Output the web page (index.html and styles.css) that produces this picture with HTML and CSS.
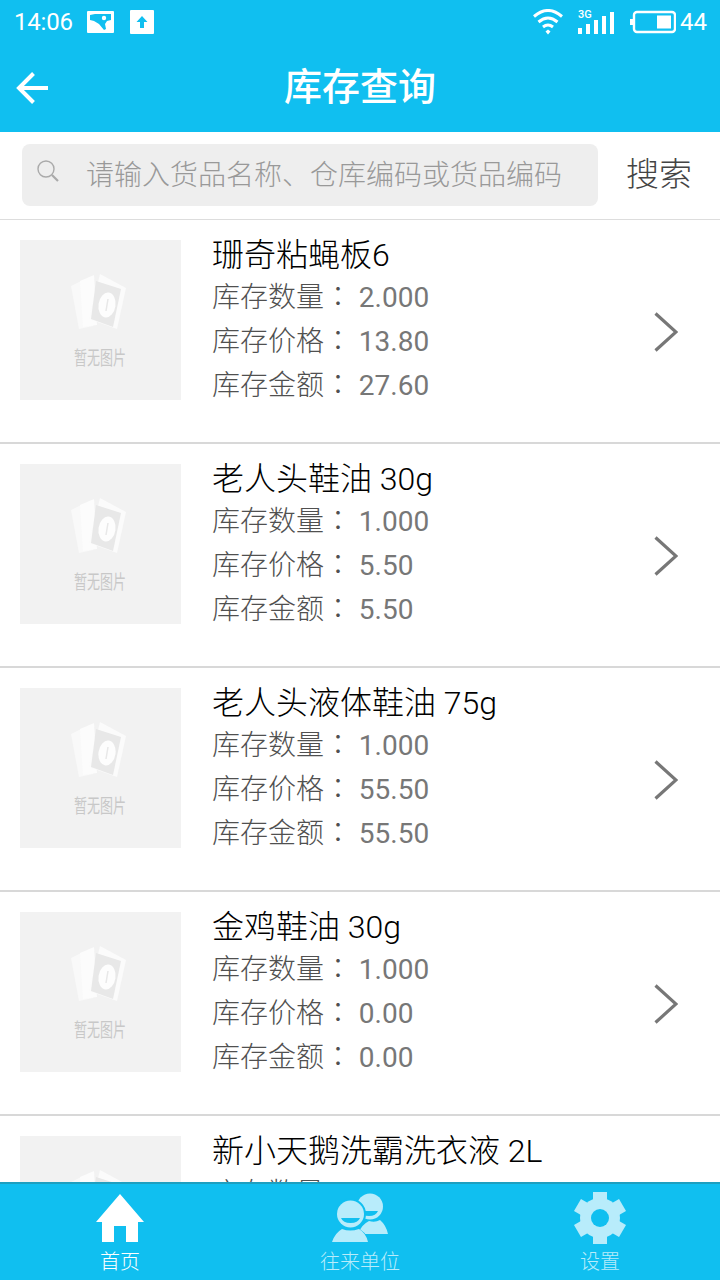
FILE: index.html
```
<!DOCTYPE html>
<html lang="zh-CN">

<head>
    <meta charset="UTF-8">
    <meta name="viewport" content="width=device-width, initial-scale=1.0">
    <title>库存查询</title>
    <link rel="stylesheet" href="styles.css">
</head>

<body>
    <svg class="defs" width="0" height="0">
        <symbol id="no-image" viewBox="0 0 161 160">
            <path d="M51 46l12-6 10 46-14 3z" fill="#f9f9f9" />
            <path d="M60 41l14-6 3 50-14 2z" fill="#fcfcfc" />
            <path d="M80 34l26 14-9 41-28-10z" fill="#fbfbfb" />
            <path d="M76 41l25 8-8 38-22-8z" fill="#e8e8e8" />
            <ellipse cx="87" cy="65" rx="8.500" ry="12.500" transform="rotate(8 87 65)" fill="#fdfdfd" />
            <path d="M88 59l-2 12" stroke="#e8e8e8" stroke-width="1.500" />
            <text x="54" y="124.500" textLength="52" lengthAdjust="spacingAndGlyphs">暂无图片</text>
        </symbol>
        <symbol id="arrow" viewBox="0 0 24 40">
            <path d="M1.500 1.500L22 20 1.500 38.500" fill="none" stroke="#777" stroke-width="3.200" />
        </symbol>
    </svg>

    <div class="page">
        <div class="header">
            <div class="status">
                <span class="time">14:06</span>
                <svg class="icon-pic" width="27" height="22" viewBox="0 0 27 22">
                    <rect width="27" height="22" rx="1" fill="#fff" />
                    <path d="M3 4l5-1h16v6l-4 1-2 3 1 5-2 1-5-6-5-3-4-1z" fill="#10bff0" />
                    <circle cx="17" cy="7" r="2.200" fill="#fff" />
                </svg>
                <svg class="icon-up" width="24" height="24" viewBox="0 0 24 24">
                    <rect width="24" height="24" rx="1" fill="#fff" />
                    <path d="M12 6l5.500 6H14v6h-4v-6H6.500z" fill="#10bff0" />
                </svg>
                <svg class="icon-wifi" width="30" height="26" viewBox="0 0 30 26" fill="none" stroke="#fff" stroke-width="3">
                    <path d="M1 7.500q14-12 28 0M5.500 13q9.500-8 19 0M10 18q5-4 10 0" />
                    <path d="M15 20.500l2.500 2-2.500 3-2.500-3z" fill="#fff" stroke="none" />
                </svg>
                <svg class="icon-signal" width="38" height="26" viewBox="0 0 38 26">
                    <text x="0" y="9">3G</text>
                    <path d="M2 19v6M10 15v10M18 11v14M26 7v18M34 3v22" stroke="#fff" stroke-width="4" />
                </svg>
                <svg class="icon-battery" width="46" height="24" viewBox="0 0 46 24">
                    <rect x="4" y="2" width="41" height="20" rx="3" fill="none" stroke="#fff" stroke-width="2.400" />
                    <rect x="0" y="9" width="3" height="6" fill="#fff" />
                    <rect x="27" y="5.500" width="14" height="13" fill="#fff" />
                </svg>
                <span class="power">44</span>
            </div>
            <div class="title-bar">
                <svg class="back" width="32" height="32" viewBox="0 0 32 32" fill="none" stroke="#fff" stroke-width="4">
                    <path d="M17.500 1.500L3 16l14.500 14.500M3 16h29" />
                </svg>
                <h1 class="title">库存查询</h1>
            </div>
        </div>

        <div class="search">
            <div class="search-box">
                <svg class="icon-search" width="22" height="22" viewBox="0 0 22 22" fill="none" stroke="#aaa">
                    <circle cx="9" cy="9" r="8" stroke-width="1.400" />
                    <path d="M15 15l6 6" stroke-width="2.200" />
                </svg>
                <span class="placeholder">请输入货品名称、仓库编码或货品编码</span>
            </div>
            <span class="search-btn">搜索</span>
        </div>

        <ul class="list">
            <li class="item">
                <svg class="thumb"><use href="#no-image" /></svg>
                <div class="info">
                    <h2 class="name">珊奇粘蝇板6</h2>
                    <p>库存数量<i lang="zh-TW">：</i> <span>2.000</span></p>
                    <p>库存价格<i lang="zh-TW">：</i> <span>13.80</span></p>
                    <p>库存金额<i lang="zh-TW">：</i> <span>27.60</span></p>
                </div>
                <svg class="arrow"><use href="#arrow" /></svg>
            </li>
            <li class="item">
                <svg class="thumb"><use href="#no-image" /></svg>
                <div class="info">
                    <h2 class="name">老人头鞋油 30g</h2>
                    <p>库存数量<i lang="zh-TW">：</i> <span>1.000</span></p>
                    <p>库存价格<i lang="zh-TW">：</i> <span>5.50</span></p>
                    <p>库存金额<i lang="zh-TW">：</i> <span>5.50</span></p>
                </div>
                <svg class="arrow"><use href="#arrow" /></svg>
            </li>
            <li class="item">
                <svg class="thumb"><use href="#no-image" /></svg>
                <div class="info">
                    <h2 class="name">老人头液体鞋油 75g</h2>
                    <p>库存数量<i lang="zh-TW">：</i> <span>1.000</span></p>
                    <p>库存价格<i lang="zh-TW">：</i> <span>55.50</span></p>
                    <p>库存金额<i lang="zh-TW">：</i> <span>55.50</span></p>
                </div>
                <svg class="arrow"><use href="#arrow" /></svg>
            </li>
            <li class="item">
                <svg class="thumb"><use href="#no-image" /></svg>
                <div class="info">
                    <h2 class="name">金鸡鞋油 30g</h2>
                    <p>库存数量<i lang="zh-TW">：</i> <span>1.000</span></p>
                    <p>库存价格<i lang="zh-TW">：</i> <span>0.00</span></p>
                    <p>库存金额<i lang="zh-TW">：</i> <span>0.00</span></p>
                </div>
                <svg class="arrow"><use href="#arrow" /></svg>
            </li>
            <li class="item">
                <svg class="thumb"><use href="#no-image" /></svg>
                <div class="info">
                    <h2 class="name">新小天鹅洗霸洗衣液 2L</h2>
                    <p>库存数量</p>
                </div>
            </li>
        </ul>

        <div class="nav">
            <div class="nav-item active">
                <svg width="56" height="56" viewBox="0 0 56 56" fill="currentColor">
                    <path d="M28 4l24 28h-6v20H34V36H22v16H10V32H4z" />
                </svg>
                <span>首页</span>
            </div>
            <div class="nav-item">
                <svg width="56" height="56" viewBox="0 0 56 56">
                    <circle cx="38" cy="16.500" r="13" fill="currentColor" />
                    <path d="M28 21h18q-2 5-9 5-7 0-9-5z" fill="#10bff0" />
                    <path d="M26 44q3-9 11-13 6 2 11-1 6 5 8 14z" fill="currentColor" />
                    <circle cx="18.500" cy="24" r="15.500" fill="#10bff0" />
                    <path d="M24 37q10 4 13 15H24z" fill="#10bff0" />
                    <circle cx="18.500" cy="24" r="13.500" fill="currentColor" />
                    <path d="M9 28h19q-2 5-9.500 5T9 28z" fill="#10bff0" />
                    <path d="M0 52q3-9 10-13 8 3 17 0 7 4 9 13z" fill="currentColor" />
                </svg>
                <span>往来单位</span>
            </div>
            <div class="nav-item">
                <svg width="56" height="56" viewBox="0 0 56 56">
                    <g fill="currentColor">
                        <circle cx="28" cy="28" r="20" />
                        <path id="tooth" d="M21 2h14v18H21z" />
                        <use href="#tooth" transform="rotate(60 28 28)" />
                        <use href="#tooth" transform="rotate(120 28 28)" />
                        <use href="#tooth" transform="rotate(180 28 28)" />
                        <use href="#tooth" transform="rotate(240 28 28)" />
                        <use href="#tooth" transform="rotate(300 28 28)" />
                    </g>
                    <circle cx="28" cy="28" r="9" fill="#10bff0" />
                </svg>
                <span>设置</span>
            </div>
        </div>
    </div>
</body>

</html>
```
FILE: styles.css
```
* {
    margin: 0;
    padding: 0;
    box-sizing: border-box;
}

body {
    font-family: Roboto, "Noto Sans CJK SC", sans-serif;
    font-weight: 300;
    background: #fff;
}

svg {
    display: block;
    flex-shrink: 0;
}

.defs {
    position: absolute;
}

.page {
    display: flex;
    flex-direction: column;
    width: 720px;
    height: 1280px;
    overflow: hidden;
}

.header {
    height: 132px;
    flex-shrink: 0;
    background: #10bff0;
    color: #fff;
}

.status {
    display: flex;
    align-items: center;
    height: 44px;
    padding: 0 13px 0 14px;
    font-size: 24px;
    font-weight: 400;
}

.time {
    width: 59px;
    letter-spacing: -0.2px;
}

.icon-pic {
    margin-left: 14px;
}

.icon-up {
    margin-left: 16px;
}

.icon-wifi {
    margin-left: auto;
}

.icon-signal {
    margin-left: 15px;
    font-size: 11px;
    font-weight: 500;
    fill: #fff;
}

.icon-battery {
    margin-left: 14px;
    margin-right: 4px;
}

.title-bar {
    display: flex;
    align-items: center;
    height: 88px;
    padding: 0 16px;
}

.title {
    flex: 1;
    margin-right: 32px;
    padding-bottom: 9px;
    text-align: center;
    font-size: 38px;
    font-weight: 500;
}

.search {
    display: flex;
    align-items: center;
    height: 88px;
    flex-shrink: 0;
    padding: 0 28px 2px 22px;
    border-bottom: 1px solid #ddd;
}

.search-box {
    display: flex;
    align-items: center;
    width: 576px;
    height: 62px;
    padding: 0 15px 4px;
    border-radius: 8px;
    background: #eee;
}

.icon-search {
    margin-bottom: 3px;
}

.placeholder {
    margin-left: 27px;
    font-size: 28px;
    color: #999;
}

.search-btn {
    margin-left: auto;
    padding-bottom: 6px;
    font-size: 33px;
    color: #444;
}

.list {
    flex: 1;
    min-height: 0;
    overflow: hidden;
    list-style: none;
}

.item {
    display: flex;
    height: 224px;
    padding: 20px 42px 0 20px;
    border-bottom: 2px solid #d8d8d8;
}

.thumb {
    width: 161px;
    height: 160px;
    background: #f2f2f2;
    font-size: 19px;
    font-weight: 400;
    fill: #c8c8c8;
}

.info {
    flex: 1;
    margin-left: 31px;
    margin-top: -5px;
    font-size: 28px;
    color: #505050;
}

.info p {
    height: 44px;
    line-height: 45px;
}

.info i {
    font-family: "Noto Sans CJK TC", sans-serif;
    font-style: normal;
    line-height: 1;
}

.info span {
    font-weight: 400;
    color: #777;
}

.name {
    height: 40px;
    line-height: 40px;
    font-size: 32px;
    font-weight: 300;
    color: #000;
}

.arrow {
    width: 24px;
    height: 40px;
    margin-top: 72px;
}

.nav {
    display: flex;
    height: 98px;
    flex-shrink: 0;
    border-top: 2px solid #1d9fc0;
    background: #10bff0;
}

.nav-item {
    display: flex;
    flex: 1;
    flex-direction: column;
    align-items: center;
    padding-top: 6px;
    font-size: 20px;
    line-height: 32px;
    color: #b8ecfb;
}

.nav-item.active {
    color: #fff;
}
```
